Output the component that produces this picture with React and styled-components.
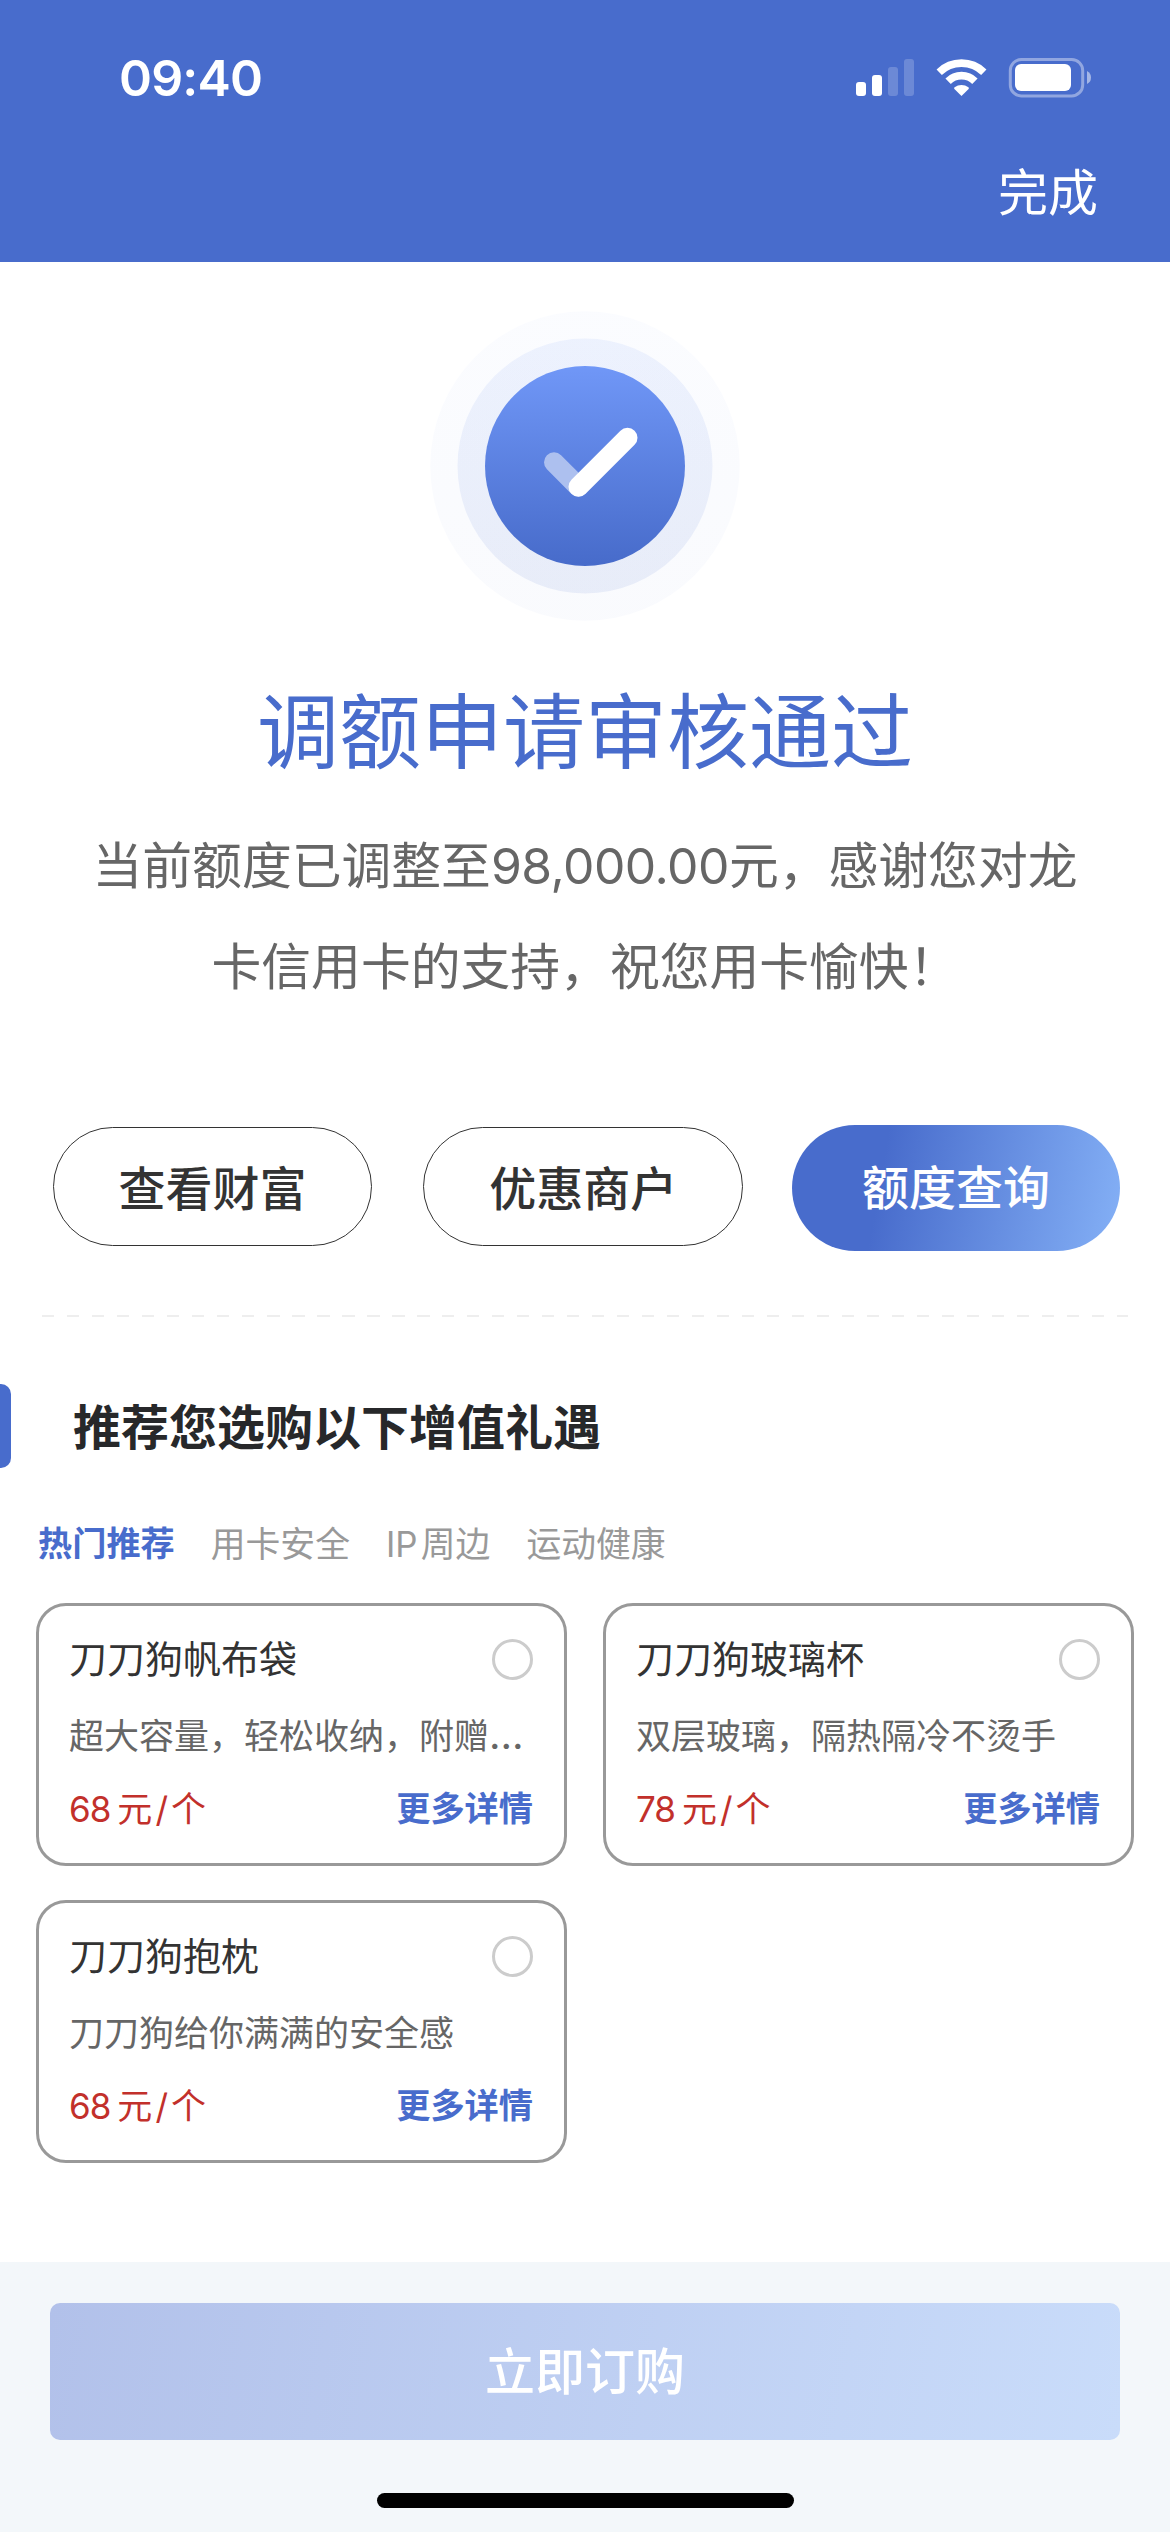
import React from 'react';
import styled, { createGlobalStyle } from 'styled-components';

const TABS = ['热门推荐', '用卡安全', 'IP 周边', '运动健康'];

const GIFTS = [
  { id: 1, name: '刀刀狗帆布袋', desc: '超大容量，轻松收纳，附赠', more: true, price: 68 },
  { id: 2, name: '刀刀狗玻璃杯', desc: '双层玻璃，隔热隔冷不烫手', price: 78 },
  { id: 3, name: '刀刀狗抱枕', desc: '刀刀狗给你满满的安全感', price: 68 },
];

const StatusIcons = () => (
  <svg width="236" height="40" viewBox="0 0 236 40" fill="#fff">
    <rect x="0" y="24" width="10" height="14" rx="3" />
    <rect x="16" y="17" width="10" height="21" rx="3" />
    <rect x="32" y="9" width="10" height="29" rx="3" opacity="0.2" />
    <rect x="48" y="1" width="10" height="37" rx="3" opacity="0.2" />
    <g fill="none" stroke="#fff" strokeWidth="7.6">
      <path d="M83.2 14.2 A32 32 0 0 1 127.8 14.2" />
      <path d="M92.1 23.2 A19 19 0 0 1 118.9 23.2" />
    </g>
    <path d="M105.5 38 L98.4 30.9 Q97.6 30 98.6 29.2 A11.5 11.5 0 0 1 112.4 29.2 Q113.4 30 112.6 30.9 Z" />
    <rect x="154.3" y="1.5" width="72.4" height="36.4" rx="11" fill="none" stroke="#fff" strokeWidth="3" opacity="0.4" />
    <rect x="159" y="6" width="56" height="27" rx="6" />
    <path d="M231 13 Q235 15 235 19.5 Q235 24 231 26 Z" opacity="0.5" />
  </svg>
);

const SuccessIcon = () => (
  <svg width="310" height="310" viewBox="0 0 310 310">
    <defs>
      <linearGradient id="disc" x1="0" y1="0" x2="0" y2="1">
        <stop offset="0" stopColor="#7097f7" />
        <stop offset="1" stopColor="#476bca" />
      </linearGradient>
    </defs>
    <circle cx="155" cy="155" r="154.7" fill="url(#disc)" opacity="0.03" />
    <circle cx="155" cy="155" r="127.5" fill="url(#disc)" opacity="0.1" />
    <circle cx="155" cy="155" r="100" fill="url(#disc)" />
    <path d="M124 151.3 L148.3 175.6" stroke="#adc0ef" strokeWidth="20" strokeLinecap="round" />
    <path d="M148.5 175.8 L197.5 126.8" stroke="#fff" strokeWidth="20" strokeLinecap="round" />
  </svg>
);

const GiftCard = ({ gift }) => (
  <Card>
    <CardRow>
      <GiftName>{gift.name}</GiftName>
      <Radio />
    </CardRow>
    <GiftDesc>
      {gift.desc}
      { gift.more && <Dots>…</Dots> }
    </GiftDesc>
    <CardRow>
      <Price><b>{gift.price}</b>元<i>/</i>个</Price>
      <MoreLink>更多详情</MoreLink>
    </CardRow>
  </Card>
);

class App extends React.Component {
  constructor(props) {
    super(props);
    this.state = {
      tab: TABS[0],
    }
  }

  render() {
    return (
      <Page lang="zh-CN">
        <GlobalStyle />
        <Header>
          <StatusBar>
            <Time>09:40</Time>
            <StatusIcons />
          </StatusBar>
          <NavBar>完成</NavBar>
        </Header>

        <Result>
          <SuccessIcon />
          <ResultTitle>调额申请审核通过</ResultTitle>
          <ResultText>
            当前额度已调整至<Amount>98,000.00</Amount>元，感谢您对龙<br />
            卡信用卡的支持，祝您用卡愉快！
          </ResultText>
        </Result>

        <Actions>
          <ActionButton>查看财富</ActionButton>
          <ActionButton>优惠商户</ActionButton>
          <ActionButton $primary>额度查询</ActionButton>
        </Actions>
        <Divider />

        <SectionTitle><span>推荐您选购以下增值礼遇</span></SectionTitle>
        <Tabs>
          { TABS.map(tab => (
            <Tab key={tab} $active={tab === this.state.tab} onClick={() => this.setState({ tab })}>
              {tab}
            </Tab>
          ))}
        </Tabs>
        <GiftGrid>
          { GIFTS.map(gift => <GiftCard key={gift.id} gift={gift} />) }
        </GiftGrid>

        <Footer>
          <OrderButton>立即订购</OrderButton>
          <HomeIndicator />
        </Footer>
      </Page>
    );
  }
}

export default App;


const GlobalStyle = createGlobalStyle`
  body {
    margin: 0;
    background: #fff;
  }

  * {
    box-sizing: border-box;
  }
`;

const Page = styled.div`
  display: flex;
  flex-direction: column;
  width: 1170px;
  height: 2532px;
  overflow: hidden;
  background: #fff;
  color: #333;
  font-family: Inter, 'Noto Sans CJK SC', sans-serif;

  svg {
    display: block;
    flex: none;
  }

  button {
    padding: 0;
    font-family: inherit;
    cursor: pointer;
  }
`;

const Header = styled.header`
  height: 262px;
  flex: none;
  background: #486ccc;
  color: #fff;
`;

const StatusBar = styled.div`
  display: flex;
  justify-content: space-between;
  align-items: flex-start;
  padding: 58px 78px 0 119px;
`;

const Time = styled.div`
  margin-top: -2px;
  font-size: 50px;
  line-height: 44px;
  font-weight: 600;
  letter-spacing: -0.8px;
`;

const NavBar = styled.div`
  display: flex;
  justify-content: flex-end;
  padding: 63px 72px 0 0;
  font-size: 50px;
  line-height: 60px;
`;

const Result = styled.section`
  display: flex;
  flex-direction: column;
  align-items: center;
  padding-top: 49px;
`;

const ResultTitle = styled.h1`
  margin: 62px 0 0;
  font-size: 82px;
  line-height: 100px;
  font-weight: 400;
  color: #486ccc;
`;

const ResultText = styled.p`
  margin: 33px 0 0;
  font-size: 49.8px;
  line-height: 101px;
  color: #666;
  text-align: center;
  white-space: nowrap;
`;

const Amount = styled.span`
  letter-spacing: -0.5px;
`;

const Actions = styled.div`
  display: flex;
  align-items: flex-start;
  gap: 51px;
  padding: 107px 50px 0 52.5px;
`;

const ActionButton = styled.button`
  width: ${props => props.$primary ? '328px' : '320px'};
  height: ${props => props.$primary ? '126px' : '119px'};
  margin: ${props => props.$primary ? '0 0 0 -2px' : '2px 0 0'};
  border: ${props => props.$primary ? 'none' : '1px solid #333'};
  border-radius: 63px;
  background: ${props => props.$primary
    ? 'linear-gradient(100deg, #486ccc 28%, #84b0f6 100%)'
    : '#fff'
  };
  color: ${props => props.$primary ? '#fff' : '#333'};
  font-size: 47px;
  line-height: ${props => props.$primary ? '126px' : '121px'};
  font-weight: 500;
`;

const Divider = styled.div`
  height: 2px;
  margin: 64px 42px 0;
  background: repeating-linear-gradient(90deg, #eee 0 12.5px, transparent 12.5px 25px);
`;

const SectionTitle = styled.h2`
  display: flex;
  align-items: center;
  height: 84px;
  margin: 67px 0 0;
  font-size: 48px;
  font-weight: 600;
  color: #27282a;

  span {
    padding-bottom: 4px;
  }

  &::before {
    content: '';
    width: 11px;
    height: 84px;
    margin-right: 62px;
    border-radius: 0 10px 10px 0;
    background: #486ccc;
  }
`;

const Tabs = styled.div`
  display: flex;
  gap: 36px;
  padding: 51px 38px 0;
`;

const Tab = styled.div`
  font-size: ${props => props.$active ? '34.2px' : '34.8px'};
  line-height: 50px;
  font-weight: ${props => props.$active ? 600 : 400};
  color: ${props => props.$active ? '#486ccc' : '#999'};
  word-spacing: -6.5px;
  cursor: pointer;
`;

const GiftGrid = styled.div`
  display: grid;
  grid-template-columns: 531px 531px;
  gap: 34px 36px;
  padding: 34px 36px 0;
`;

const Card = styled.div`
  height: 263px;
  padding: 23px 31px 0 30px;
  border: 3px solid #999;
  border-radius: 30px;
`;

const CardRow = styled.div`
  display: flex;
  justify-content: space-between;
  align-items: center;
`;

const GiftName = styled.div`
  font-size: 38px;
  line-height: 60px;
`;

const Radio = styled.div`
  width: 41px;
  height: 41px;
  border: 3px solid #ccc;
  border-radius: 50%;
`;

const GiftDesc = styled.div`
  height: 60px;
  margin: 17px 0 13px;
  font-size: 35px;
  line-height: 60px;
  color: #666;
  white-space: nowrap;
`;

const Dots = styled.span`
  font-size: 40px;
  line-height: 1;
`;

const Price = styled.div`
  font-size: 35px;
  line-height: 60px;
  color: #c2302b;

  b {
    margin-right: 7px;
    font-weight: 400;
    letter-spacing: -1px;
  }

  i {
    margin: 0 3px;
    font-style: normal;
  }
`;

const MoreLink = styled.div`
  font-size: 34.2px;
  line-height: 60px;
  font-weight: 600;
  color: #486ccc;
`;

const Footer = styled.footer`
  display: flex;
  flex-direction: column;
  align-items: center;
  height: 270px;
  margin-top: auto;
  padding: 41px 50px 0;
  flex: none;
  background: #f3f7fa;
`;

const OrderButton = styled.button`
  width: 100%;
  height: 137px;
  border: none;
  border-radius: 10px;
  background: linear-gradient(100deg, #b2c1ea, #c9dcfa);
  color: #fff;
  font-size: 50px;
  line-height: 132px;
  font-weight: 500;
`;

const HomeIndicator = styled.div`
  width: 417px;
  height: 15px;
  margin-top: 53px;
  border-radius: 8px;
  background: #000;
`;
